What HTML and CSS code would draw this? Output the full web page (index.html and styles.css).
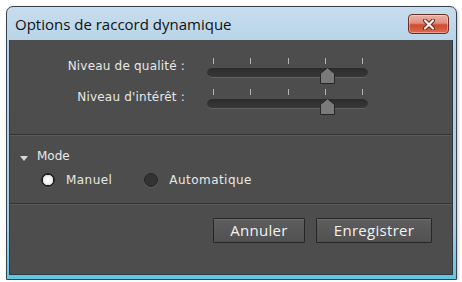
FILE: index.html
```html
<!DOCTYPE html>
<html lang="fr">
<head>
  <meta charset="UTF-8" />
  <title>Options de raccord dynamique</title>
  <link rel="stylesheet" href="styles.css">
</head>
<body>
  <div class="window">
    <div class="titlebar">
      <span class="title">Options de raccord dynamique</span>
      <button class="close" aria-label="Fermer">
        <svg width="14" height="11" viewBox="0 0 14 11">
          <path d="M3 1.5 L11 9.5 M11 1.5 L3 9.5" stroke="#5a2a25" stroke-width="4" stroke-linecap="round" />
          <path d="M3 1.5 L11 9.5 M11 1.5 L3 9.5" stroke="#fbeeee" stroke-width="2.2" stroke-linecap="round" />
        </svg>
      </button>
    </div>

    <div class="content">
      <div class="levels">
        <div class="level-row">
          <span class="level-label">Niveau de qualité :</span>
          <div class="slider">
            <div class="ticks"><i></i><i></i><i></i><i></i><i></i></div>
            <div class="track"></div>
            <svg class="thumb" width="15" height="17" viewBox="0 0 15 17">
              <path d="M0.5 6.5 L7.5 0.8 L14.5 6.5 L14.5 16.5 L0.5 16.5 Z" fill="#7a7a7a" stroke="#262626" />
            </svg>
          </div>
        </div>
        <div class="level-row">
          <span class="level-label">Niveau d'intérêt :</span>
          <div class="slider">
            <div class="ticks"><i></i><i></i><i></i><i></i><i></i></div>
            <div class="track"></div>
            <svg class="thumb" width="15" height="17" viewBox="0 0 15 17">
              <path d="M0.5 6.5 L7.5 0.8 L14.5 6.5 L14.5 16.5 L0.5 16.5 Z" fill="#7a7a7a" stroke="#262626" />
            </svg>
          </div>
        </div>
      </div>

      <div class="mode">
        <div class="mode-head"><span class="caret"></span>Mode</div>
        <div class="radios">
          <label class="radio"><span class="dot dot-on"></span>Manuel</label>
          <label class="radio"><span class="dot"></span>Automatique</label>
        </div>
      </div>

      <div class="actions">
        <button class="btn">Annuler</button>
        <button class="btn">Enregistrer</button>
      </div>
    </div>
  </div>
</body>
</html>
```

FILE: styles.css
```css
body {
  margin: 0;
  background: #fff;
  font-family: "DejaVu Sans", "Liberation Sans", sans-serif;
}
.window {
  margin: 6px 0 0 6px;
  width: 449px;
  height: 272px;
  border: 1px solid #37434d;
  border-radius: 7px 7px 0 0;
  background: linear-gradient(to bottom, #c6ddee 0%, #b7d3e8 14%, #a9cde4 80%, #62c6e2 100%);
  display: flex;
  flex-direction: column;
  box-shadow: 1px 1px 3px rgba(0, 0, 0, 0.25);
}
.titlebar {
  height: 33px;
  display: flex;
  align-items: center;
  justify-content: space-between;
  padding: 0 7px 0 8px;
}
.title {
  font-family: "Open Sans", "Liberation Sans", sans-serif;
  font-size: 15px;
  color: #111;
  margin-top: 1px;
}
.close {
  width: 41px;
  height: 20px;
  padding: 0;
  border: 1px solid #6a2e27;
  border-radius: 4px;
  background: linear-gradient(to bottom, #eab2a6 0%, #df8f7e 45%, #cd4b31 55%, #df6a4c 100%);
  display: flex;
  align-items: center;
  justify-content: center;
  box-shadow: inset 0 0 0 1px rgba(255, 255, 255, 0.35);
  margin-top: 1px;
}
.content {
  flex: 1;
  margin: 0 3px 4px 2px;
  background: #4c4d4c;
  border: 1px solid #2f3a42;
  border-top: none;
  color: #e8e8e8;
  font-size: 12px;
}
.levels {
  padding: 18px 0 18px 0;
  display: flex;
  flex-direction: column;
  gap: 4px;
  border-bottom: 1px solid #343434;
  box-shadow: 0 1px 0 #5a5a5a;
}
.level-row {
  display: flex;
  align-items: flex-start;
  gap: 22px;
}
.level-label {
  width: 175px;
  text-align: right;
  line-height: 14px;
  margin-top: 1px;
  letter-spacing: 0.2px;
}
.slider {
  position: relative;
  width: 161px;
  height: 27px;
}
.ticks {
  display: flex;
  justify-content: space-between;
  padding: 0 5px 0 6px;
  height: 6px;
}
.ticks i {
  width: 1px;
  height: 6px;
  background: #b4b4b4;
}
.track {
  margin-top: 4px;
  height: 9px;
  border-radius: 5px;
  background: linear-gradient(to bottom, #2c2c2c, #383838);
  border-bottom: 1px solid #626262;
}
.thumb {
  position: absolute;
  left: 113px;
  top: 9px;
}
.mode {
  padding: 14px 0 16px 10px;
  border-bottom: 1px solid #343434;
  box-shadow: 0 1px 0 #5a5a5a;
}
.mode-head {
  display: flex;
  align-items: center;
  line-height: 14px;
}
.caret {
  width: 0;
  height: 0;
  border-left: 4.5px solid transparent;
  border-right: 4.5px solid transparent;
  border-top: 5px solid #d8d8d8;
  margin: 5px 9px 0 0;
}
.radios {
  display: flex;
  align-items: center;
  margin-top: 10px;
  padding-left: 21px;
  gap: 32px;
}
.radio {
  display: flex;
  align-items: center;
  gap: 11px;
  line-height: 14px;
  letter-spacing: 0.45px;
}
.dot {
  width: 12px;
  height: 12px;
  border-radius: 50%;
  background: #333;
  border: 1px solid #262626;
  box-shadow: 0 1px 0 #5e5e5e;
}
.dot-on {
  background: radial-gradient(circle, #ffffff 0%, #f2f2f2 45%, #cfcfcf 60%, #1f1f1f 64%);
}
.actions {
  display: flex;
  justify-content: flex-end;
  gap: 11px;
  padding: 14px 20px 0 0;
}
.btn {
  height: 25px;
  padding: 0 14px;
  font-family: "Open Sans", "Liberation Sans", sans-serif;
  font-size: 15px;
  letter-spacing: 0.3px;
  color: #f2f2f2;
  background: linear-gradient(to bottom, #5e5e5e, #515151);
  border: 1px solid #262626;
  border-radius: 1px;
  box-shadow: inset 0 1px 0 #6c6c6c;
  line-height: 21px;
}
.btn:first-child {
  width: 92px;
}
.btn:last-child {
  width: 116px;
}
```
